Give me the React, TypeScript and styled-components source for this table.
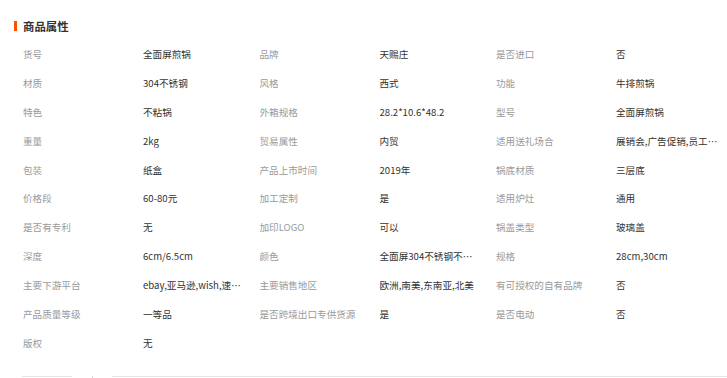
import React from "react";
import styled, { createGlobalStyle } from "styled-components";

const GlobalStyle = createGlobalStyle`
  html, body {
    margin: 0;
    padding: 0;
    background: #fff;
  }
  body {
    font-family: "Noto Sans CJK SC", "Liberation Sans", sans-serif;
    overflow: hidden;
  }
`;

const Section = styled.div`
  width: 727px;
  height: 378px;
  display: flex;
  flex-direction: column;
  box-sizing: border-box;
  padding-top: 17px;
`;

const Title = styled.div`
  display: flex;
  align-items: center;
  gap: 6px;
  padding-left: 14px;
  height: 18px;
  font-size: 11.4px;
  font-weight: 700;
  color: #333;
  line-height: 18px;
`;

const TitleBar = styled.span`
  width: 3px;
  height: 10px;
  background: #ff5000;
`;

const AttrGrid = styled.div`
  display: grid;
  grid-template-columns: repeat(3, 120px 116.5px);
  grid-auto-rows: 28.9px;
  padding-left: 23px;
  margin-top: 13px;
`;

const Cell = styled.div<{ $label?: boolean }>`
  font-size: 9.6px;
  line-height: 13px;
  color: ${(p) => (p.$label ? "#9a9a9a" : "#333")};
  white-space: nowrap;
  overflow: hidden;
  text-overflow: ellipsis;
  padding-right: ${(p) => (p.$label ? "0" : "15px")};
`;

const TabStrip = styled.div`
  margin-top: auto;
  display: flex;
  align-items: flex-start;
  height: 2px;
`;

const TabEdge = styled.div<{ $w: number; $ml: number; $grow?: boolean }>`
  width: ${(p) => p.$w}px;
  margin-left: ${(p) => p.$ml}px;
  flex: ${(p) => (p.$grow ? 1 : "none")};
  border-top: 1px solid #e5e5e5;
`;

const TabTick = styled.div`
  width: 1px;
  height: 2px;
  margin-left: 20px;
  background: #d9d9d9;
`;

const attrs: [string, string][] = [
  ["货号", "全面屏煎锅"],
  ["品牌", "天赐庄"],
  ["是否进口", "否"],
  ["材质", "304不锈钢"],
  ["风格", "西式"],
  ["功能", "牛排煎锅"],
  ["特色", "不粘锅"],
  ["外箱规格", "28.2*10.6*48.2"],
  ["型号", "全面屏煎锅"],
  ["重量", "2kg"],
  ["贸易属性", "内贸"],
  ["适用送礼场合", "展销会,广告促销,员工福利,商务礼品"],
  ["包装", "纸盒"],
  ["产品上市时间", "2019年"],
  ["锅底材质", "三层底"],
  ["价格段", "60-80元"],
  ["加工定制", "是"],
  ["适用炉灶", "通用"],
  ["是否有专利", "无"],
  ["加印LOGO", "可以"],
  ["锅盖类型", "玻璃盖"],
  ["深度", "6cm/6.5cm"],
  ["颜色", "全面屏304不锈钢不带盖"],
  ["规格", "28cm,30cm"],
  ["主要下游平台", "ebay,亚马逊,wish,速卖通"],
  ["主要销售地区", "欧洲,南美,东南亚,北美"],
  ["有可授权的自有品牌", "否"],
  ["产品质量等级", "一等品"],
  ["是否跨境出口专供货源", "是"],
  ["是否电动", "否"],
  ["版权", "无"],
];

const App: React.FC = () => {
  return (
    <>
      <GlobalStyle />
      <Section>
        <Title>
          <TitleBar />
          商品属性
        </Title>
        <AttrGrid>
          {attrs.map(([label, value]) => (
            <React.Fragment key={label}>
              <Cell $label>{label}</Cell>
              <Cell>{value}</Cell>
            </React.Fragment>
          ))}
        </AttrGrid>
        <TabStrip>
          <TabEdge $w={50} $ml={22} />
          <TabTick />
          <TabEdge $w={0} $ml={19} $grow />
        </TabStrip>
      </Section>
    </>
  );
};

export default App;
